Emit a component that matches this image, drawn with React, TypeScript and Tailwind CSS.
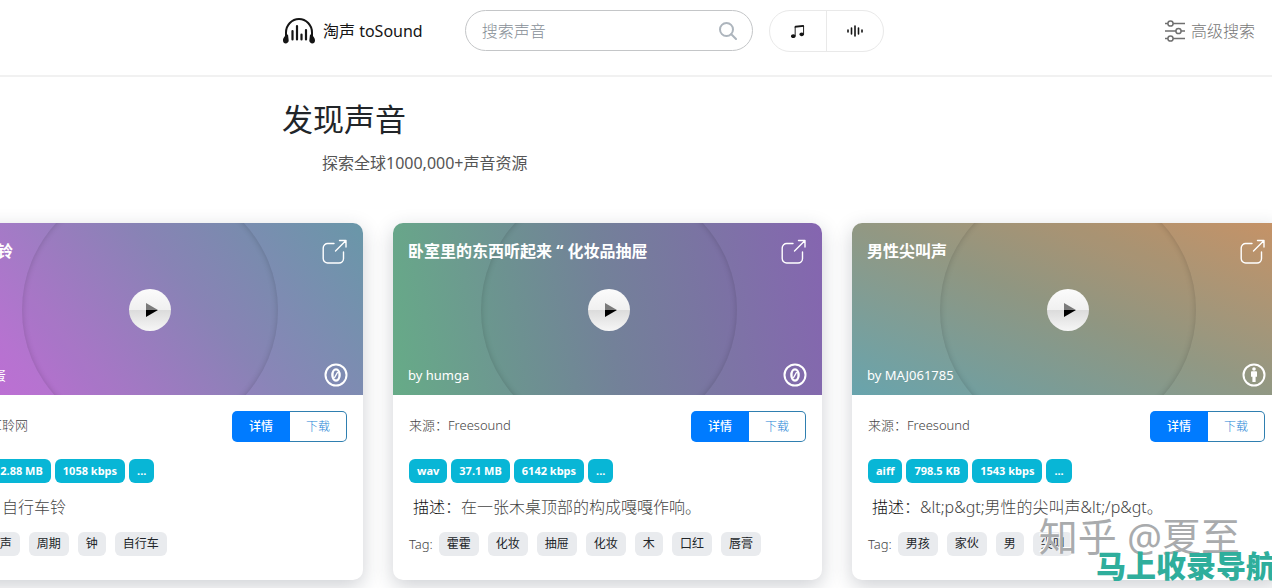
import { BsMusicNoteBeamed } from "react-icons/bs";

type Sound = {
  title: string;
  author: string;
  source: string;
  license: "zero" | "by";
  cover: string;
  info: string[];
  description: string;
  tags: string[];
};

const sounds: Sound[] = [
  {
    title: "自行车铃",
    author: "大笨蛋",
    source: "耳聆网",
    license: "zero",
    cover: "bg-[linear-gradient(50deg,#c46ad8_0%,#b673d0_20%,#8a85b8_60%,#6997a8_100%)]",
    info: ["wav", "2.88 MB", "1058 kbps", "..."],
    description: "自行车铃",
    tags: ["铃声", "周期", "钟", "自行车"],
  },
  {
    title: "卧室里的东西听起来 “ 化妆品抽屉",
    author: "humga",
    source: "Freesound",
    license: "zero",
    cover: "bg-[linear-gradient(80deg,#66ab87_0%,#75839b_50%,#8565b0_100%)]",
    info: ["wav", "37.1 MB", "6142 kbps", "..."],
    description: "在一张木桌顶部的构成嘎嘎作响。",
    tags: ["霍霍", "化妆", "抽屉", "化妆", "木", "口红", "唇膏"],
  },
  {
    title: "男性尖叫声",
    author: "MAJ061785",
    source: "Freesound",
    license: "by",
    cover: "bg-[linear-gradient(to_top_right,#68a4ad_0%,#929883_50%,#c69266_100%)]",
    info: ["aiff", "798.5 KB", "1543 kbps", "..."],
    description: "&lt;p&gt;男性的尖叫声&lt;/p&gt。",
    tags: ["男孩", "家伙", "男", "尖叫"],
  },
];

function LogoIcon() {
  return (
    <svg width="32" height="28" viewBox="0 0 32 28" fill="none" stroke="#151515" strokeLinecap="round">
      <path d="M3 19v-3.500a13 13.500 0 0 1 26 0V19" strokeWidth="2" />
      <path d="M5 17.500c-3 .5-5 3.500-5 6 0 2 1.200 3 2.700 3s3-1.400 3-3zM27 17.500c3 .5 5 3.500 5 6 0 2-1.200 3-2.700 3s-3-1.400-3-3z" fill="#151515" stroke="none" />
      <path d="M9.500 14v8.500M14 9v13.500M18.500 17.500v5M23 13v9.500" strokeWidth="2.200" />
    </svg>
  );
}

function SearchIcon() {
  return (
    <svg width="18" height="18" viewBox="0 0 18 18" fill="none" stroke="#adb5bd" strokeWidth="2">
      <circle cx="7.500" cy="7.500" r="6.500" />
      <path d="m12.300 12.300 4.700 4.700" strokeLinecap="round" />
    </svg>
  );
}

function WaveIcon() {
  return (
    <svg width="16" height="12" viewBox="0 0 16 12" fill="none" stroke="#151515" strokeWidth="1.600" strokeLinecap="round">
      <path d="M1 5v2M4.500 3v6M8 1v10M11.500 3v6M15 5v2" />
    </svg>
  );
}

function SlidersIcon() {
  return (
    <svg width="20" height="22" viewBox="0 0 20 22" fill="none" stroke="#707070" strokeWidth="1.500">
      <path d="M0 3.500h3M8 3.500h12M0 11h11M16 11h4M0 18.500h3M8 18.500h12" />
      <circle cx="5.500" cy="3.500" r="2.600" />
      <circle cx="13.500" cy="11" r="2.600" />
      <circle cx="5.500" cy="18.500" r="2.600" />
    </svg>
  );
}

function OpenIcon() {
  return (
    <svg width="26" height="26" viewBox="0 0 26 26" fill="none" stroke="white" strokeWidth="1.400" strokeLinecap="round" strokeLinejoin="round">
      <path d="M12 4.500H6A4.500 4.500 0 0 0 1.200 9v10.500A4.500 4.500 0 0 0 6 24h11a4.500 4.500 0 0 0 4.500-4.500V13" />
      <path d="M13.500 12 23.500 2M17.500 1.500H24V8" />
    </svg>
  );
}

function LicenseIcon({ type }: { type: Sound["license"] }) {
  return (
    <svg width="24" height="24" viewBox="0 0 24 24" fill="none" stroke="white">
      <circle cx="12" cy="12" r="10.500" strokeWidth="2" />
      {type === "zero" ? (
        <>
          <ellipse cx="12" cy="12" rx="3.600" ry="5.600" strokeWidth="2.400" />
          <path d="m10.300 15 3.400-6" strokeWidth="1.400" />
        </>
      ) : (
        <g fill="white" stroke="none">
          <circle cx="12" cy="6" r="1.800" />
          <path d="M9.800 8.300h4.400c.5 0 .8.3.8.8v4.700h-1.400V19h-3.200v-5.200H9V9.100c0-.5.3-.8.800-.8z" />
        </g>
      )}
    </svg>
  );
}

function PlayButton() {
  return (
    <button
      aria-label="播放"
      className="flex size-[42px] items-center justify-center rounded-full bg-[linear-gradient(#fbfbfb_0%,#f0f0f0_50%,#dcdcdc_51%,#f6f6f6_100%)]"
    >
      <svg width="12" height="14" viewBox="0 0 12 14" className="ml-1">
        <path d="M0 0 12 7H0z" fill="#7b7b7b" />
        <path d="M0 7h12L0 14z" fill="#000" />
      </svg>
    </button>
  );
}

function SoundCard({ sound }: { sound: Sound }) {
  return (
    <article className="w-[429px] shrink-0 overflow-hidden rounded-[10px] bg-white shadow-[0_6px_20px_rgba(30,40,60,0.22)]">
      <div className={`relative flex h-43 flex-col justify-between overflow-hidden px-[15px] text-white ${sound.cover}`}>
        <div className="absolute inset-0 flex items-center justify-center pt-0.5 pl-0.5">
          <div className="flex size-64 shrink-0 items-center justify-center rounded-full bg-black/[0.01] shadow-[inset_0_0_6px_rgba(0,0,0,0.18)]">
            <PlayButton />
          </div>
        </div>
        <div className="relative flex items-start justify-between pt-4">
          <h2 className="text-base leading-6 font-bold">{sound.title}</h2>
          <a href="#" aria-label="打开">
            <OpenIcon />
          </a>
        </div>
        <div className="relative flex items-center justify-between pb-2">
          <span className="text-[13px] leading-5">by {sound.author}</span>
          <LicenseIcon type={sound.license} />
        </div>
      </div>

      <div className="px-4 pt-4 pb-6">
        <div className="flex items-start justify-between">
          <p className="pt-1 text-[13px] leading-5 font-light text-[#444]">来源：{sound.source}</p>
          <div className="flex h-[31px] text-xs">
            <button className="w-[58px] rounded-l-[5px] bg-[#007bff] font-medium text-white">详情</button>
            <button className="w-[57px] rounded-r-[5px] border border-l-0 border-[#2f7fb0] font-light text-[#2384d6]">
              下载
            </button>
          </div>
        </div>

        <div className="mt-[17px] flex gap-1 text-[11px] font-bold text-white">
          {sound.info.map((item) => (
            <span key={item} className="rounded-md bg-[#08b6d6] px-2 leading-6">
              {item}
            </span>
          ))}
        </div>

        <p className="mt-3 ml-1 text-base leading-6 font-light text-[#444]">
          <span className="text-[#111]">描述</span>：{sound.description}
        </p>

        <div className="mt-[13px] flex items-center gap-[9px] text-xs leading-6 text-[#212529]">
          <span className="-mr-[3px] text-[13px] font-light text-[#444]">Tag:</span>
          {sound.tags.map((tag, i) => (
            <span key={i} className="rounded-md bg-[#e9ebee] px-2">
              {tag}
            </span>
          ))}
        </div>
      </div>
    </article>
  );
}

export default function App() {
  return (
    <div className="relative min-h-screen overflow-hidden bg-white font-['Noto_Sans','Noto_Sans_CJK_SC',sans-serif] text-[#212529]">
      <header className="flex h-[77px] items-start border-b-2 border-[#f1f1f1] pt-[10px] pr-[17px] pl-[283px]">
        <a href="#" className="flex h-[42px] items-center gap-2 text-base text-[#151515]">
          <LogoIcon />
          <span className="whitespace-nowrap">淘声 toSound</span>
        </a>
        <form className="ml-[42px] flex h-[41px] w-72 items-center rounded-full border border-[#c4c6c8] pr-[15px] pl-4">
          <input
            aria-label="搜索声音"
            placeholder="搜索声音"
            className="min-w-0 flex-1 text-base font-light outline-none placeholder:text-[#868e96]"
          />
          <button aria-label="搜索">
            <SearchIcon />
          </button>
        </form>
        <div className="ml-4 flex h-[42px] w-[115px] rounded-full border border-[#e9e9e9] text-[#151515]">
          <button aria-label="音乐" className="flex flex-1 items-center justify-center border-r border-[#e9e9e9]">
            <BsMusicNoteBeamed size={15} />
          </button>
          <button aria-label="音效" className="flex flex-1 items-center justify-center">
            <WaveIcon />
          </button>
        </div>
        <a href="#" className="ml-auto flex h-[42px] items-center gap-1.5 text-base font-light text-[#777]">
          <SlidersIcon />
          高级搜索
        </a>
      </header>

      <main>
        <div className="pt-[22px] pl-[282px]">
          <h1 className="text-[31px] leading-10">发现声音</h1>
          <p className="mt-3 pl-10 text-base leading-6 text-[#555]">探索全球1000,000+声音资源</p>
        </div>
        <div className="mt-12 -ml-[66px] flex gap-[30px]">
          {sounds.map((sound) => (
            <SoundCard key={sound.title} sound={sound} />
          ))}
        </div>
      </main>

      <div className="pointer-events-none absolute right-8 bottom-7 text-[39px] leading-12 text-[#a9abad] [text-shadow:-1px_-1px_0_white]">
        知乎 @夏至
      </div>
      <div className="pointer-events-none absolute -right-1 bottom-1.5 text-[30px] leading-8 font-black whitespace-nowrap text-[#2fae9c]">
        马上收录导航
      </div>
    </div>
  );
}
